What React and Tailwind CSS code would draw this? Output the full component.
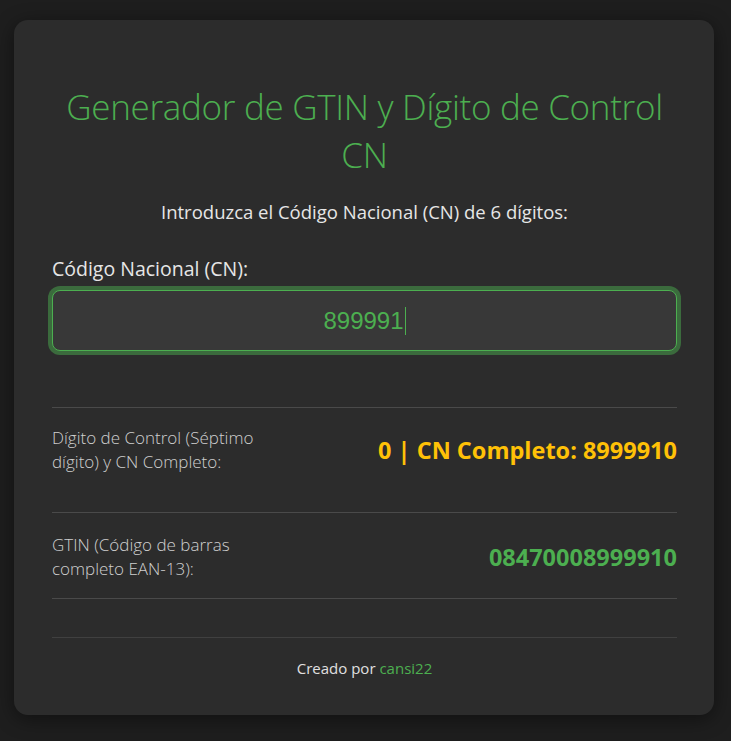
export default function App() {
  return (
    <div className="min-h-screen bg-[#1e1e1e] pt-[20px] pl-[14px] pb-[26px]" style={{ fontFamily: '"Open Sans", "Noto Sans", sans-serif' }}>
      <div className="w-[700px] rounded-[14px] bg-[#2c2c2c] shadow-[0_4px_20px_rgba(0,0,0,0.45)] pl-[38px] pr-[37px] pt-[63px] pb-[37px]">
        <h1 className="text-center text-[#4caf50] font-light text-[35px] leading-[48px] tracking-[-0.3px]">
          Generador de GTIN y Dígito de Control<br />CN
        </h1>
        <p className="mt-[21px] text-center text-[#e6e6e6] text-[18.5px] leading-[24px]">
          Introduzca el Código Nacional (CN) de 6 dígitos:
        </p>
        <label className="block mt-[33px] text-[#e6e6e6] text-[19.5px] leading-[24px]">Código Nacional (CN):</label>
        <div className="mt-[9px] h-[61px] rounded-[8px] border border-[#4caf50] bg-[#383838] shadow-[0_0_0_4px_rgba(76,175,80,0.48)] flex items-center justify-center">
          <span className="text-[#4caf50] text-[24px]" style={{ fontFamily: '"Liberation Sans", Arial, sans-serif' }}>899991</span>
          <span className="ml-[1px] w-[1px] h-[28px] bg-[#4caf50]" />
        </div>
        <div className="mt-[56px] border-t border-[#4a4a4a]">
          <div className="pt-[18px] pb-[18px] mb-[20px] flex items-center justify-between">
            <div className="text-[#cfcfcf] text-[17px] font-light leading-[24px]">
              Dígito de Control (Séptimo<br />dígito) y CN Completo:
            </div>
            <div className="text-[#ffc107] font-bold text-[23.5px] leading-[28px]">0 | CN Completo: 8999910</div>
          </div>
          <div className="border-t border-b border-[#4a4a4a] pt-[20px] pb-[17px] flex items-center justify-between">
            <div className="text-[#cfcfcf] text-[17px] font-light leading-[24px]">
              GTIN (Código de barras<br />completo EAN-13):
            </div>
            <div className="text-[#4caf50] font-bold text-[23.5px] leading-[28px]">08470008999910</div>
          </div>
        </div>
        <div className="mt-[38px] border-t border-[#404040] pt-[20px] text-center text-[15px] leading-[20px] text-[#e0e0e0]">
          Creado por <span className="text-[#4caf50]">cansi22</span>
        </div>
      </div>
    </div>
  );
}
